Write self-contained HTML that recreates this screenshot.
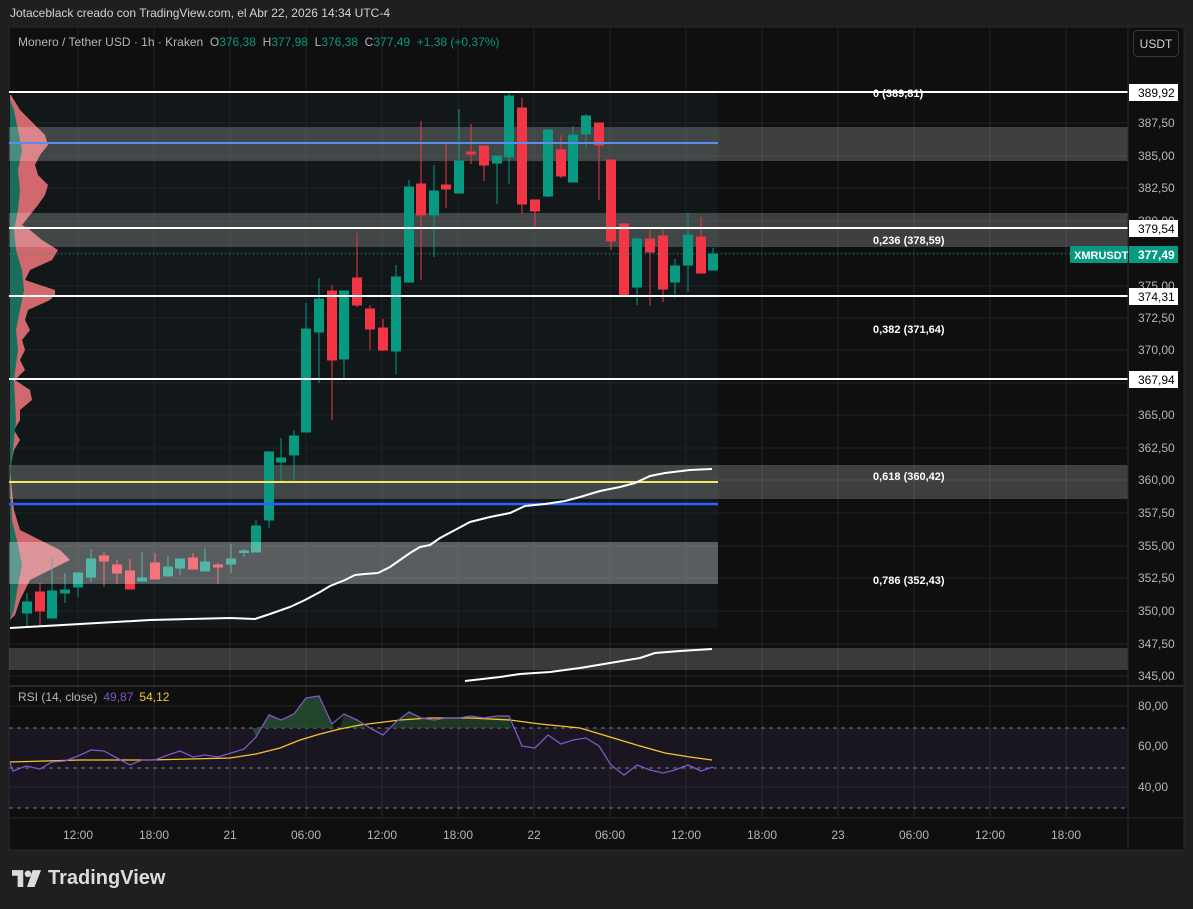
<!DOCTYPE html>
<html><head><meta charset="utf-8"><style>
html,body{margin:0;padding:0;background:#1f1f1f;width:1193px;height:909px;overflow:hidden;font-family:"Liberation Sans",sans-serif}
.hdr{position:absolute;left:10px;top:6px;font-size:12px;color:#d1d4dc}
svg{position:absolute;left:0;top:0}
.logo{position:absolute;left:12px;top:867px;color:#dcdcdc;font-weight:bold;font-size:20px;display:flex;align-items:center;gap:6px}
.leg{position:absolute;left:18px;top:35px;font-size:12px;color:#b2b5be;white-space:pre}
.leg b{font-weight:normal;color:#089981}
</style></head><body>
<div class="hdr">Jotaceblack creado con TradingView.com, el Abr 22, 2026 14:34 UTC-4</div>
<svg width="1193" height="909" xmlns="http://www.w3.org/2000/svg" font-family="Liberation Sans, sans-serif">
<rect x="9" y="27" width="1175" height="823" fill="#0f0f0f" stroke="#2a2a2a"/>
<rect x="9" y="92" width="709" height="536" fill="#12181a"/>
<g stroke="#1f2426" stroke-width="1">
<line x1="9" y1="123" x2="1128" y2="123"/><line x1="9" y1="156" x2="1128" y2="156"/><line x1="9" y1="188" x2="1128" y2="188"/><line x1="9" y1="221" x2="1128" y2="221"/><line x1="9" y1="253" x2="1128" y2="253"/><line x1="9" y1="286" x2="1128" y2="286"/><line x1="9" y1="318" x2="1128" y2="318"/><line x1="9" y1="350" x2="1128" y2="350"/><line x1="9" y1="383" x2="1128" y2="383"/><line x1="9" y1="415" x2="1128" y2="415"/><line x1="9" y1="448" x2="1128" y2="448"/><line x1="9" y1="480" x2="1128" y2="480"/><line x1="9" y1="513" x2="1128" y2="513"/><line x1="9" y1="546" x2="1128" y2="546"/><line x1="9" y1="578" x2="1128" y2="578"/><line x1="9" y1="611" x2="1128" y2="611"/><line x1="9" y1="644" x2="1128" y2="644"/><line x1="9" y1="676" x2="1128" y2="676"/>
<line x1="9" y1="706" x2="1128" y2="706"/><line x1="9" y1="787" x2="1128" y2="787"/>
<line x1="78" y1="27" x2="78" y2="818"/><line x1="154" y1="27" x2="154" y2="818"/><line x1="230" y1="27" x2="230" y2="818"/><line x1="306" y1="27" x2="306" y2="818"/><line x1="382" y1="27" x2="382" y2="818"/><line x1="458" y1="27" x2="458" y2="818"/><line x1="534" y1="27" x2="534" y2="818"/><line x1="610" y1="27" x2="610" y2="818"/><line x1="686" y1="27" x2="686" y2="818"/><line x1="762" y1="27" x2="762" y2="818"/><line x1="838" y1="27" x2="838" y2="818"/><line x1="914" y1="27" x2="914" y2="818"/><line x1="990" y1="27" x2="990" y2="818"/><line x1="1066" y1="27" x2="1066" y2="818"/>
</g>
<polygon fill="#d0686e" points="10,95 11,95 20,110 35,125 45,135 48,145 40,155 35,165 38,175 48,185 45,195 38,205 30,215 22,225 30,230 42,240 58,250 52,260 30,270 25,280 55,290 55,295 50,300 28,310 25,320 30,330 22,340 25,350 20,360 25,370 15,380 30,390 32,400 20,410 20,420 14,430 20,440 14,450 12,460 10,470 14,510 20,530 40,540 60,550 70,560 50,570 30,580 25,590 20,600 15,615 10,620"/>
<polygon fill="#1c6e5c" points="10,100 14,110 18,130 22,150 18,170 20,190 18,210 14,230 16,250 22,270 24,290 20,310 16,330 18,350 14,380 16,420 12,460 10,470 12,520 18,545 22,565 18,585 14,610 10,620"/>
<rect x="9" y="127" width="1119" height="34" fill="rgba(255,255,255,0.2)"/>
<rect x="9" y="213" width="1119" height="34" fill="rgba(255,255,255,0.2)"/>
<rect x="9" y="465" width="1119" height="34" fill="rgba(255,255,255,0.2)"/>
<rect x="9" y="648" width="1119" height="22" fill="rgba(255,255,255,0.18)"/>
<g stroke="#089981" fill="#089981">
<line x1="27" y1="593" x2="27" y2="627"/><rect x="22.5" y="602" width="9" height="11"/>
<line x1="52" y1="558" x2="52" y2="618"/><rect x="47.5" y="591" width="9" height="27"/>
<line x1="65" y1="573" x2="65" y2="603"/><rect x="60.5" y="590" width="9" height="3"/>
<line x1="78" y1="573" x2="78" y2="597"/><rect x="73.5" y="573" width="9" height="14"/>
<line x1="91" y1="549" x2="91" y2="582"/><rect x="86.5" y="559" width="9" height="18"/>
<line x1="142" y1="552" x2="142" y2="581"/><rect x="137.5" y="578" width="9" height="3"/>
<line x1="168" y1="556" x2="168" y2="576"/><rect x="163.5" y="567" width="9" height="9"/>
<line x1="180" y1="559" x2="180" y2="575"/><rect x="175.5" y="559" width="9" height="9"/>
<line x1="205" y1="548" x2="205" y2="571"/><rect x="200.5" y="562" width="9" height="9"/>
<line x1="231" y1="544" x2="231" y2="573"/><rect x="226.5" y="559" width="9" height="5"/>
<line x1="244" y1="549" x2="244" y2="557"/><rect x="239.5" y="551" width="9" height="1.5"/>
<line x1="256" y1="520" x2="256" y2="552"/><rect x="251.5" y="526" width="9" height="26"/>
<line x1="269" y1="451" x2="269" y2="528"/><rect x="264.5" y="452" width="9" height="68"/>
<line x1="281" y1="438" x2="281" y2="481"/><rect x="276.5" y="458" width="9" height="4"/>
<line x1="294" y1="430" x2="294" y2="481"/><rect x="289.5" y="436" width="9" height="19"/>
<line x1="306" y1="303" x2="306" y2="432"/><rect x="301.5" y="329" width="9" height="103"/>
<line x1="319" y1="278" x2="319" y2="383"/><rect x="314.5" y="299" width="9" height="33"/>
<line x1="344" y1="291" x2="344" y2="378"/><rect x="339.5" y="291" width="9" height="68"/>
<line x1="396" y1="265" x2="396" y2="374"/><rect x="391.5" y="277" width="9" height="74"/>
<line x1="409" y1="180" x2="409" y2="283"/><rect x="404.5" y="187" width="9" height="95"/>
<line x1="434" y1="165" x2="434" y2="257"/><rect x="429.5" y="191" width="9" height="24"/>
<line x1="459" y1="109" x2="459" y2="193"/><rect x="454.5" y="161" width="9" height="32"/>
<line x1="497" y1="156" x2="497" y2="204"/><rect x="492.5" y="156" width="9" height="7"/>
<line x1="509" y1="93" x2="509" y2="184"/><rect x="504.5" y="96" width="9" height="61"/>
<line x1="548" y1="130" x2="548" y2="197"/><rect x="543.5" y="130" width="9" height="66"/>
<line x1="573" y1="126" x2="573" y2="182"/><rect x="568.5" y="135" width="9" height="47"/>
<line x1="586" y1="114" x2="586" y2="148"/><rect x="581.5" y="116" width="9" height="18"/>
<line x1="637" y1="237" x2="637" y2="305"/><rect x="632.5" y="239" width="9" height="48"/>
<line x1="675" y1="259" x2="675" y2="298"/><rect x="670.5" y="266" width="9" height="16"/>
<line x1="688" y1="213" x2="688" y2="292"/><rect x="683.5" y="235" width="9" height="30"/>
<line x1="713" y1="248" x2="713" y2="270"/><rect x="708.5" y="254" width="9" height="16"/>
</g>
<g stroke="#f23645" fill="#f23645">
<line x1="40" y1="583" x2="40" y2="627"/><rect x="35.5" y="592" width="9" height="19"/>
<line x1="104" y1="552" x2="104" y2="587"/><rect x="99.5" y="556" width="9" height="5"/>
<line x1="117" y1="560" x2="117" y2="584"/><rect x="112.5" y="565" width="9" height="8"/>
<line x1="130" y1="559" x2="130" y2="589"/><rect x="125.5" y="571" width="9" height="18"/>
<line x1="155" y1="553" x2="155" y2="579"/><rect x="150.5" y="563" width="9" height="16"/>
<line x1="193" y1="553" x2="193" y2="569"/><rect x="188.5" y="558" width="9" height="11"/>
<line x1="218" y1="563" x2="218" y2="584"/><rect x="213.5" y="565" width="9" height="2"/>
<line x1="332" y1="285" x2="332" y2="420"/><rect x="327.5" y="291" width="9" height="69"/>
<line x1="357" y1="233" x2="357" y2="307"/><rect x="352.5" y="278" width="9" height="27"/>
<line x1="370" y1="305" x2="370" y2="350"/><rect x="365.5" y="309" width="9" height="20"/>
<line x1="383" y1="319" x2="383" y2="351"/><rect x="378.5" y="328" width="9" height="22"/>
<line x1="421" y1="121" x2="421" y2="280"/><rect x="416.5" y="184" width="9" height="31"/>
<line x1="446" y1="144" x2="446" y2="208"/><rect x="441.5" y="185" width="9" height="4"/>
<line x1="471" y1="124" x2="471" y2="164"/><rect x="466.5" y="152" width="9" height="2"/>
<line x1="484" y1="146" x2="484" y2="181"/><rect x="479.5" y="146" width="9" height="19"/>
<line x1="522" y1="98" x2="522" y2="214"/><rect x="517.5" y="108" width="9" height="96"/>
<line x1="535" y1="200" x2="535" y2="229"/><rect x="530.5" y="200" width="9" height="11"/>
<line x1="561" y1="135" x2="561" y2="178"/><rect x="556.5" y="150" width="9" height="26"/>
<line x1="599" y1="123" x2="599" y2="200"/><rect x="594.5" y="123" width="9" height="22"/>
<line x1="611" y1="160" x2="611" y2="250"/><rect x="606.5" y="160" width="9" height="81"/>
<line x1="624" y1="223" x2="624" y2="295"/><rect x="619.5" y="224" width="9" height="71"/>
<line x1="650" y1="230" x2="650" y2="306"/><rect x="645.5" y="239" width="9" height="13"/>
<line x1="663" y1="227" x2="663" y2="302"/><rect x="658.5" y="236" width="9" height="53"/>
<line x1="701" y1="217" x2="701" y2="273"/><rect x="696.5" y="237" width="9" height="36"/>
</g>
<rect x="9" y="542" width="709" height="42" fill="rgba(255,255,255,0.3)"/>
<line x1="9" y1="143" x2="718" y2="143" stroke="#5b8df0" stroke-width="2"/>
<line x1="9" y1="482" x2="718" y2="482" stroke="#f5e663" stroke-width="2"/>
<line x1="9" y1="504" x2="718" y2="504" stroke="#2962ff" stroke-width="2.5"/>
<g stroke="#fff" stroke-width="2"><line x1="9" y1="92" x2="1128" y2="92"/><line x1="9" y1="228" x2="1128" y2="228"/><line x1="9" y1="296" x2="1128" y2="296"/><line x1="9" y1="379" x2="1128" y2="379"/></g>
<line x1="9" y1="254" x2="1128" y2="254" stroke="#089981" stroke-dasharray="1 3"/>
<polyline fill="none" stroke="#fff" stroke-width="2" points="10,628 80,624 150,620 230,618 255,619 270,614 290,607 305,600 320,592 330,586 345,580 355,575 365,574 378,573 390,567 400,560 410,553 420,547 430,545 440,538 455,530 470,522 490,517 510,513 525,506 545,504 565,501 580,497 600,491 620,487 635,483 650,476 665,473 690,470 712,469"/>
<polyline fill="none" stroke="#fff" stroke-width="2" points="465,681 500,677 520,674 550,672 580,668 610,663 640,658 655,653 680,651 712,649"/>
<g fill="#fff" font-size="11" font-weight="bold"><text x="873" y="97">0 (389,81)</text><text x="873" y="244">0,236 (378,59)</text><text x="873" y="333">0,382 (371,64)</text><text x="873" y="480">0,618 (360,42)</text><text x="873" y="584">0,786 (352,43)</text></g>
<rect x="1133.5" y="30.5" width="45" height="26" rx="4" fill="#0f0f0f" stroke="#3a3a3a"/>
<text x="1156" y="48" font-size="12" fill="#d1d4dc" text-anchor="middle">USDT</text>
<line x1="9" y1="686" x2="1183" y2="686" stroke="#2a2a2a" stroke-width="2"/>
<rect x="9" y="728" width="1119" height="80" fill="rgba(126,87,194,0.1)"/>
<g stroke="#787b86" stroke-dasharray="4 4"><line x1="9" y1="728" x2="1128" y2="728"/><line x1="9" y1="768" x2="1128" y2="768"/><line x1="9" y1="808" x2="1128" y2="808"/></g>
<polygon fill="#245232" opacity="0.8" points="252,728 256,737 269,715 281,720 294,714 306,698 319,696 332,724 334,728"/>
<polygon fill="#245232" opacity="0.6" points="340,728 344,714 357,720 366,728"/>
<polygon fill="#245232" opacity="0.6" points="392,728 396,722 409,712 421,718 434,720 446,718 459,718 471,716 484,718 497,716 509,716 512,728"/>
<polyline fill="none" stroke="#f7c530" stroke-width="1.3" points="10,762 80,760 150,760 230,758 256,754 280,748 300,740 320,734 340,729 360,725 400,720 430,718 470,718 510,720 540,724 580,728 610,737 640,746 665,753 690,757 712,760"/>
<polyline fill="none" stroke="#7e57c2" stroke-width="1.3" points="10,763 13,771 26,766 40,769 52,762 65,761 78,756 91,750 104,751 117,758 130,765 142,760 155,760 168,755 180,751 193,757 205,755 218,757 231,753 244,749 256,737 269,715 281,720 294,714 306,698 319,696 332,724 344,714 357,720 370,728 383,735 396,722 409,712 421,718 434,720 446,718 459,718 471,716 484,718 497,716 509,716 522,746 535,748 548,735 561,744 573,740 586,738 599,746 611,765 624,775 637,765 650,770 663,773 675,770 688,765 701,771 713,767"/>
<text x="18" y="701" font-size="12" fill="#b2b5be">RSI (14, close)<tspan dx="6" fill="#7e57c2">49,87</tspan><tspan dx="6" fill="#f7c530">54,12</tspan></text>
<line x1="1128" y1="27" x2="1128" y2="850" stroke="#2a2a2a"/>
<line x1="9" y1="818" x2="1183" y2="818" stroke="#2a2a2a"/>
<g font-size="12" fill="#b2b5be" text-anchor="middle">
<text x="78" y="839">12:00</text><text x="154" y="839">18:00</text><text x="230" y="839">21</text><text x="306" y="839">06:00</text><text x="382" y="839">12:00</text><text x="458" y="839">18:00</text><text x="534" y="839">22</text><text x="610" y="839">06:00</text><text x="686" y="839">12:00</text><text x="762" y="839">18:00</text><text x="838" y="839">23</text><text x="914" y="839">06:00</text><text x="990" y="839">12:00</text><text x="1066" y="839">18:00</text>
</g>
<g font-size="12" fill="#b2b5be">
<text x="1138" y="127">387,50</text><text x="1138" y="160">385,00</text><text x="1138" y="192">382,50</text><text x="1138" y="225">380,00</text><text x="1138" y="290">375,00</text><text x="1138" y="322">372,50</text><text x="1138" y="354">370,00</text><text x="1138" y="419">365,00</text><text x="1138" y="452">362,50</text><text x="1138" y="484">360,00</text><text x="1138" y="517">357,50</text><text x="1138" y="550">355,00</text><text x="1138" y="582">352,50</text><text x="1138" y="615">350,00</text><text x="1138" y="648">347,50</text><text x="1138" y="680">345,00</text>
<text x="1138" y="710">80,00</text><text x="1138" y="750">60,00</text><text x="1138" y="791">40,00</text>
</g>
<g font-size="12">
<rect x="1129" y="84" width="49" height="17" fill="#fff"/><text x="1138" y="97" fill="#000">389,92</text>
<rect x="1129" y="220" width="49" height="17" fill="#fff"/><text x="1138" y="233" fill="#000">379,54</text>
<rect x="1129" y="288" width="49" height="17" fill="#fff"/><text x="1138" y="301" fill="#000">374,31</text>
<rect x="1129" y="371" width="49" height="17" fill="#fff"/><text x="1138" y="384" fill="#000">367,94</text>
<rect x="1070" y="246" width="58" height="17" rx="2" fill="#089981"/><text x="1074" y="259" fill="#fff" font-weight="bold" font-size="11">XMRUSDT</text>
<rect x="1129" y="246" width="49" height="17" fill="#089981"/><text x="1138" y="259" fill="#fff" font-weight="bold">377,49</text>
</g>
</svg>
<div class="leg">Monero / Tether USD · 1h · Kraken  O<b>376,38</b>  H<b>377,98</b>  L<b>376,38</b>  C<b>377,49  +1,38 (+0,37%)</b></div>
<div class="logo"><svg width="30" height="17" viewBox="0 0 32 18" style="position:static"><path d="M0 0h12v18H6V6H0z" fill="#dcdcdc"/><circle cx="17" cy="4" r="3.5" fill="#dcdcdc"/><path d="M22 0h9l-7 18h-8z" fill="#dcdcdc"/></svg><span>TradingView</span></div>
</body></html>
